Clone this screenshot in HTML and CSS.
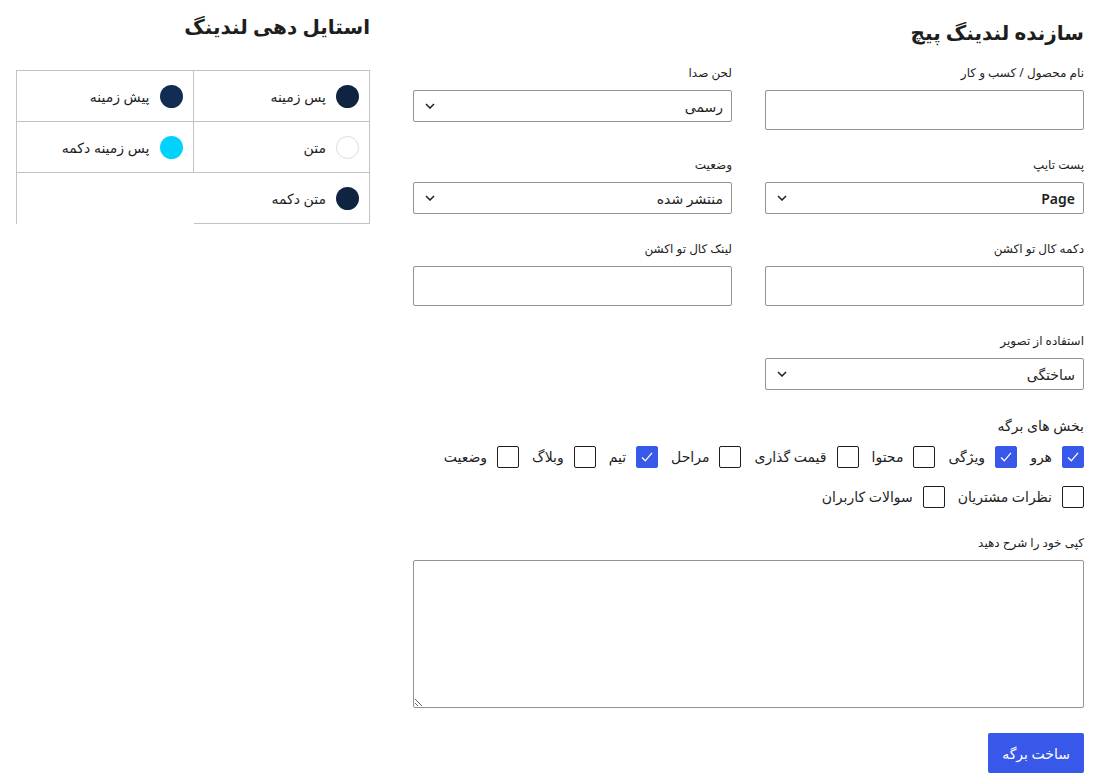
FILE: index.html
```html
<!DOCTYPE html>
<html lang="fa" dir="rtl">
<head>
<meta charset="utf-8">
<title>سازنده لندینگ پیچ</title>
<link rel="stylesheet" href="styles.css">
</head>
<body>
<div class="page">
  <main class="builder">
    <h1 class="title">سازنده لندینگ پیچ</h1>
    <div class="fields">
      <div class="field">
        <label class="label">نام محصول / کسب و کار</label>
        <input class="input" type="text">
      </div>
      <div class="field">
        <label class="label">لحن صدا</label>
        <div class="select-wrap">
          <select class="select"><option>رسمی</option></select>
          <svg class="chev" width="10" height="6" viewBox="0 0 10 6"><path d="M1 1l4 4 4-4" fill="none" stroke="#1e1e1e" stroke-width="1.5"/></svg>
        </div>
      </div>
      <div class="field">
        <label class="label">پست تایپ</label>
        <div class="select-wrap">
          <select class="select select-latin"><option>Page</option></select>
          <svg class="chev" width="10" height="6" viewBox="0 0 10 6"><path d="M1 1l4 4 4-4" fill="none" stroke="#1e1e1e" stroke-width="1.5"/></svg>
        </div>
      </div>
      <div class="field">
        <label class="label">وضعیت</label>
        <div class="select-wrap">
          <select class="select"><option>منتشر شده</option></select>
          <svg class="chev" width="10" height="6" viewBox="0 0 10 6"><path d="M1 1l4 4 4-4" fill="none" stroke="#1e1e1e" stroke-width="1.5"/></svg>
        </div>
      </div>
      <div class="field">
        <label class="label">دکمه کال تو اکشن</label>
        <input class="input" type="text">
      </div>
      <div class="field">
        <label class="label">لینک کال تو اکشن</label>
        <input class="input" type="text">
      </div>
      <div class="field">
        <label class="label">استفاده از تصویر</label>
        <div class="select-wrap">
          <select class="select"><option>ساختگی</option></select>
          <svg class="chev" width="10" height="6" viewBox="0 0 10 6"><path d="M1 1l4 4 4-4" fill="none" stroke="#1e1e1e" stroke-width="1.5"/></svg>
        </div>
      </div>
    </div>

    <div class="sections">
      <div class="sections-title">بخش های برگه</div>
      <div class="checks">
        <label class="check"><span class="box on"><svg width="16" height="16" viewBox="0 0 16 16"><path d="M3 8.5l3.3 3.3 6.7-8" fill="none" stroke="#fff" stroke-width="1.3"/></svg></span>هرو</label>
        <label class="check"><span class="box on"><svg width="16" height="16" viewBox="0 0 16 16"><path d="M3 8.5l3.3 3.3 6.7-8" fill="none" stroke="#fff" stroke-width="1.3"/></svg></span>ویژگی</label>
        <label class="check"><span class="box"></span>محتوا</label>
        <label class="check"><span class="box"></span>قیمت گذاری</label>
        <label class="check"><span class="box"></span>مراحل</label>
        <label class="check"><span class="box on"><svg width="16" height="16" viewBox="0 0 16 16"><path d="M3 8.5l3.3 3.3 6.7-8" fill="none" stroke="#fff" stroke-width="1.3"/></svg></span>تیم</label>
        <label class="check"><span class="box"></span>وبلاگ</label>
        <label class="check"><span class="box"></span>وضعیت</label>
        <label class="check"><span class="box"></span>نظرات مشتریان</label>
        <label class="check"><span class="box"></span>سوالات کاربران</label>
      </div>
    </div>

    <div class="field desc">
      <label class="label">کپی خود را شرح دهید</label>
      <textarea class="textarea"></textarea>
    </div>

    <div class="actions">
      <button class="btn" type="button">ساخت برگه</button>
    </div>
  </main>

  <aside class="styles-panel">
    <h2 class="panel-title">استایل دهی لندینگ</h2>
    <div class="swatches">
      <div class="swatch"><span class="dot navy"></span>پس زمینه</div>
      <div class="swatch"><span class="dot navy2"></span>پیش زمینه</div>
      <div class="swatch"><span class="dot white"></span>متن</div>
      <div class="swatch"><span class="dot cyan"></span>پس زمینه دکمه</div>
      <div class="swatch"><span class="dot navy"></span>متن دکمه</div>
    </div>
  </aside>
</div>
</body>
</html>
```
FILE: styles.css
```css
* { box-sizing: border-box; }

body {
  margin: 0;
  background: #fff;
  color: #1e1e1e;
  font-family: "Noto Sans", "DejaVu Sans", sans-serif;
}

.page {
  display: flex;
  justify-content: space-between;
  align-items: flex-start;
  padding: 14px 33px 12px 16px;
}

.builder {
  width: 671px;
  padding-top: 6px;
}

.title {
  margin: 0;
  font-size: 20px;
  line-height: 26px;
  font-weight: 700;
}

.fields {
  margin-top: 18px;
  display: grid;
  grid-template-columns: 1fr 1fr;
  column-gap: 33px;
  row-gap: 26px;
  align-items: start;
}

.label {
  display: block;
  font-size: 12px;
  line-height: 18px;
  margin-bottom: 8px;
}

.input {
  display: block;
  width: 100%;
  height: 40px;
  border: 1px solid #949494;
  border-radius: 2px;
  background: #fff;
  font: inherit;
}

.select-wrap {
  position: relative;
}

.select {
  display: block;
  width: 100%;
  height: 32px;
  border: 1px solid #949494;
  border-radius: 2px;
  background: #fff;
  color: #1e1e1e;
  font-family: inherit;
  font-size: 14px;
  padding: 0 8px 0 30px;
  appearance: none;
  -webkit-appearance: none;
}

.select-latin {
  font-weight: 600;
}

.chev {
  position: absolute;
  left: 12px;
  top: 13px;
}

.sections {
  margin-top: 27px;
}

.sections-title {
  font-size: 14px;
  line-height: 18px;
}

.checks {
  margin-top: 11px;
  display: flex;
  flex-wrap: wrap;
  column-gap: 13px;
  row-gap: 18px;
}

.check {
  display: flex;
  align-items: center;
  gap: 10px;
  font-size: 14px;
  line-height: 22px;
}

.box {
  width: 22px;
  height: 22px;
  border: 1px solid #1e1e1e;
  border-radius: 2px;
  background: #fff;
  display: flex;
  align-items: center;
  justify-content: center;
}

.box.on {
  background: #3858e9;
  border-color: #3858e9;
}

.desc {
  margin-top: 26px;
}

.textarea {
  display: block;
  width: 100%;
  height: 148px;
  border: 1px solid #949494;
  border-radius: 2px;
  font: inherit;
  resize: vertical;
}

.actions {
  margin-top: 25px;
  display: flex;
}

.btn {
  height: 40px;
  padding: 0 14px;
  min-width: 93px;
  border: 0;
  border-radius: 2px;
  background: #3858e9;
  color: #fff;
  font-family: inherit;
  font-size: 14px;
}

.styles-panel {
  width: 354px;
}

.panel-title {
  margin: 0;
  font-size: 20px;
  line-height: 26px;
  font-weight: 700;
}

.swatches {
  margin-top: 30px;
  display: grid;
  grid-template-columns: 1fr 1fr;
  border-top: 1px solid #c3c3c3;
  border-left: 1px solid #c3c3c3;
}

.swatch {
  height: 51px;
  display: flex;
  align-items: center;
  gap: 10px;
  padding: 0 10px;
  font-size: 14px;
  border-right: 1px solid #c3c3c3;
  border-bottom: 1px solid #c3c3c3;
}

.dot {
  width: 23px;
  height: 23px;
  border-radius: 50%;
  flex: none;
}

.navy { background: #0f2441; }
.navy2 { background: #112d53; }
.cyan { background: #00d2fc; }
.white { background: #fff; border: 1px solid #dcdcdc; }
```
